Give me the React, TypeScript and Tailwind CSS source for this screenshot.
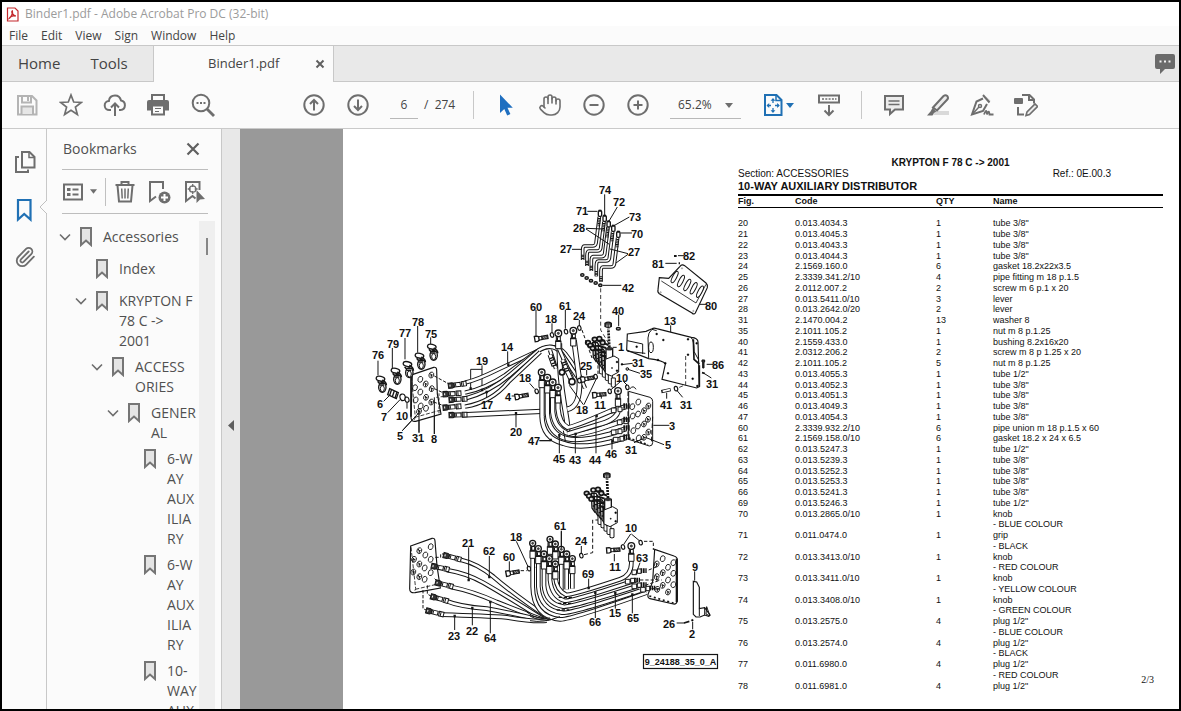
import { Fragment, type ReactNode } from 'react'
import { Hand, Paperclip } from 'lucide-react'

interface Part {
  fig: string
  code: string
  qty: number
  name: string
  note?: string
}

interface BookmarkNode {
  title: string
  children?: BookmarkNode[]
}

const parts: Part[] = [
  { fig: '20', code: '0.013.4034.3', qty: 1, name: 'tube 3/8"' },
  { fig: '21', code: '0.013.4045.3', qty: 1, name: 'tube 3/8"' },
  { fig: '22', code: '0.013.4043.3', qty: 1, name: 'tube 3/8"' },
  { fig: '23', code: '0.013.4044.3', qty: 1, name: 'tube 3/8"' },
  { fig: '24', code: '2.1569.160.0', qty: 6, name: 'gasket 18.2x22x3.5' },
  { fig: '25', code: '2.3339.341.2/10', qty: 4, name: 'pipe fitting m 18 p.1.5' },
  { fig: '26', code: '2.0112.007.2', qty: 2, name: 'screw m 6 p.1 x 20' },
  { fig: '27', code: '0.013.5411.0/10', qty: 3, name: 'lever' },
  { fig: '28', code: '0.013.2642.0/20', qty: 2, name: 'lever' },
  { fig: '31', code: '2.1470.004.2', qty: 13, name: 'washer 8' },
  { fig: '35', code: '2.1011.105.2', qty: 1, name: 'nut m 8 p.1.25' },
  { fig: '40', code: '2.1559.433.0', qty: 1, name: 'bushing 8.2x16x20' },
  { fig: '41', code: '2.0312.206.2', qty: 2, name: 'screw m 8 p 1.25 x 20' },
  { fig: '42', code: '2.1011.105.2', qty: 5, name: 'nut m 8 p.1.25' },
  { fig: '43', code: '0.013.4055.3', qty: 1, name: 'tube 1/2"' },
  { fig: '44', code: '0.013.4052.3', qty: 1, name: 'tube 3/8"' },
  { fig: '45', code: '0.013.4051.3', qty: 1, name: 'tube 3/8"' },
  { fig: '46', code: '0.013.4049.3', qty: 1, name: 'tube 3/8"' },
  { fig: '47', code: '0.013.4054.3', qty: 1, name: 'tube 3/8"' },
  { fig: '60', code: '2.3339.932.2/10', qty: 6, name: 'pipe union m 18 p.1.5 x 60' },
  { fig: '61', code: '2.1569.158.0/10', qty: 6, name: 'gasket 18.2 x 24 x 6.5' },
  { fig: '62', code: '0.013.5247.3', qty: 1, name: 'tube 1/2"' },
  { fig: '63', code: '0.013.5239.3', qty: 1, name: 'tube 3/8"' },
  { fig: '64', code: '0.013.5252.3', qty: 1, name: 'tube 3/8"' },
  { fig: '65', code: '0.013.5253.3', qty: 1, name: 'tube 3/8"' },
  { fig: '66', code: '0.013.5241.3', qty: 1, name: 'tube 3/8"' },
  { fig: '69', code: '0.013.5246.3', qty: 1, name: 'tube 1/2"' },
  { fig: '70', code: '0.013.2865.0/10', qty: 1, name: 'knob', note: '- BLUE COLOUR' },
  { fig: '71', code: '0.011.0474.0', qty: 1, name: 'grip', note: '- BLACK' },
  { fig: '72', code: '0.013.3413.0/10', qty: 1, name: 'knob', note: '- RED COLOUR' },
  { fig: '73', code: '0.013.3411.0/10', qty: 1, name: 'knob', note: '- YELLOW COLOUR' },
  { fig: '74', code: '0.013.3408.0/10', qty: 1, name: 'knob', note: '- GREEN COLOUR' },
  { fig: '75', code: '0.013.2575.0', qty: 4, name: 'plug 1/2"', note: '- BLUE COLOUR' },
  { fig: '76', code: '0.013.2574.0', qty: 4, name: 'plug 1/2"', note: '- BLACK' },
  { fig: '77', code: '0.011.6980.0', qty: 4, name: 'plug 1/2"', note: '- RED COLOUR' },
  { fig: '78', code: '0.011.6981.0', qty: 4, name: 'plug 1/2"' },
]

const bookmarks: BookmarkNode[] = [
  {
    title: 'Accessories',
    children: [
      { title: 'Index' },
      {
        title: 'KRYPTON F\n78 C ->\n2001',
        children: [
          {
            title: 'ACCESS\nORIES',
            children: [
              {
                title: 'GENER\nAL',
                children: [
                  { title: '6-W\nAY\nAUX\nILIA\nRY' },
                  { title: '6-W\nAY\nAUX\nILIA\nRY' },
                  { title: '10-\nWAY\nAUX\nILIA\nRY' },
                ],
              },
            ],
          },
        ],
      },
    ],
  },
]

// callout number, centre x, centre y
const callouts: [string, number, number][] = [
  ['74', 605, 190], ['72', 619, 202], ['71', 582, 211], ['73', 635, 217], ['28', 579, 228],
  ['70', 637, 234], ['27', 566, 249], ['27', 634, 252], ['82', 689, 256], ['81', 658, 264],
  ['42', 628, 288], ['80', 711, 306], ['60', 536, 307], ['61', 565, 306], ['24', 579, 316],
  ['18', 551, 319], ['40', 618, 311], ['13', 670, 321], ['78', 418, 322], ['77', 405, 333],
  ['75', 431, 334], ['79', 393, 344], ['76', 378, 355], ['14', 507, 347], ['19', 482, 361],
  ['1', 621, 347], ['31', 638, 363], ['35', 646, 374], ['25', 586, 366], ['86', 718, 365],
  ['18', 525, 378], ['10', 622, 378], ['31', 712, 384], ['4', 508, 397], ['17', 487, 405],
  ['6', 380, 404], ['7', 384, 417], ['10', 402, 416], ['18', 582, 410], ['11', 600, 405],
  ['41', 666, 405], ['31', 686, 405], ['3', 672, 426], ['5', 668, 445], ['31', 631, 450],
  ['20', 516, 432], ['5', 400, 436], ['31', 418, 438], ['8', 434, 439], ['47', 534, 441],
  ['45', 559, 459], ['43', 575, 460], ['44', 595, 460], ['46', 611, 454], ['61', 560, 526],
  ['10', 631, 528], ['18', 516, 537], ['24', 581, 541], ['21', 468, 543], ['62', 489, 551],
  ['60', 509, 557], ['63', 642, 558], ['11', 615, 567], ['9', 695, 567], ['69', 588, 574],
  ['15', 615, 613], ['66', 595, 622], ['65', 633, 618], ['26', 669, 624], ['2', 692, 634],
  ['23', 454, 636], ['22', 472, 631], ['64', 490, 638],
]

function Icon({ children, className = 'h-6 w-6' }: { children: ReactNode; className?: string }) {
  return (
    <svg viewBox="0 0 24 24" className={className} fill="none" stroke="currentColor" strokeWidth="2" aria-hidden="true">
      {children}
    </svg>
  )
}

function ToolButton({ label, children, className = 'text-[#6e6e6e]' }: { label: string; children: ReactNode; className?: string }) {
  return (
    <button aria-label={label} className={`flex h-9 w-11 shrink-0 items-center justify-center ${className}`}>
      {children}
    </button>
  )
}

function Divider() {
  return <div className="h-7 w-px shrink-0 bg-[#c8c8c8]" />
}

function Toolbar() {
  return (
    <div className="flex h-[47px] items-center overflow-hidden border-b border-[#cacaca] bg-[#fbfbfb] pl-[3px]">
      <ToolButton label="Save" className="text-[#b4b4b4]">
        <Icon>
          <path d="M3 3h14l4.500 4.500V21.500H3z" />
          <path d="M7 3v6.500h9V3M13 4v4" />
          <path d="M6.500 21v-7.500h11.500V21" fill="#e6e6e6" />
        </Icon>
      </ToolButton>
      <ToolButton label="Star">
        <Icon>
          <path d="M12 2l2.700 7 7.600.4-5.900 4.700 2 7.400L12 17.300 5.600 21.500l2-7.400L1.700 9.400 9.300 9z" strokeWidth="1.700" />
        </Icon>
      </ToolButton>
      <ToolButton label="Share">
        <Icon>
          <path d="M8 17H6.500a4.500 4.500 0 0 1-.6-9C6.300 4.600 8.800 2.500 12 2.500s5.300 2 6 5a4.800 4.800 0 0 1-.5 9.500H16" />
          <path d="M12 23V11M8 14.500l4-4 4 4" />
        </Icon>
      </ToolButton>
      <ToolButton label="Print">
        <Icon>
          <path d="M5 7V2h12v5" />
          <path d="M2 7h18a2 2 0 0 1 2 2v8.500h-4v-4.500H4v4.500H0V9a2 2 0 0 1 2-2z" fill="currentColor" stroke="none" />
          <path d="M5 12.500v9h12v-9z" fill="#fbfbfb" />
          <path d="M8 15.500h6M8 18.500h4" strokeWidth="1.200" />
        </Icon>
      </ToolButton>
      <ToolButton label="Find">
        <Icon>
          <circle cx="10" cy="10" r="8.300" />
          <path d="M16 16l7 7" strokeWidth="2.800" />
          <path d="M5.500 10h2M9 10h2M12.500 10h2" strokeWidth="1.800" />
        </Icon>
      </ToolButton>

      <div className="w-[67px] shrink-0" />
      <ToolButton label="Previous page">
        <Icon>
          <circle cx="12" cy="12" r="9.700" />
          <path d="M12 17.500V7M8 11l4-4 4 4" />
        </Icon>
      </ToolButton>
      <ToolButton label="Next page">
        <Icon>
          <circle cx="12" cy="12" r="9.700" />
          <path d="M12 6.500V17M8 13l4 4 4-4" />
        </Icon>
      </ToolButton>
      <input
        aria-label="Page number"
        defaultValue="6"
        className="ml-2.5 h-7 w-7 shrink-0 border-b border-[#b8b8b8] bg-transparent text-center text-xs outline-none"
      />
      <span className="ml-1.5 w-[49px] shrink-0 whitespace-pre text-xs">/  274</span>
      <Divider />
      <div className="w-2.5 shrink-0" />

      <ToolButton label="Select" className="text-[#1f6fc0]">
        <Icon>
          <path d="M6 1.500v18.500l4.300-4 2.900 6.500 3.200-1.400-2.900-6.300h5.300z" fill="currentColor" stroke="none" />
        </Icon>
      </ToolButton>
      <ToolButton label="Pan">
        <Hand className="h-6 w-6" strokeWidth={1.6} />
      </ToolButton>
      <ToolButton label="Zoom out">
        <Icon>
          <circle cx="12" cy="12" r="9.700" />
          <path d="M7.500 12h9" />
        </Icon>
      </ToolButton>
      <ToolButton label="Zoom in">
        <Icon>
          <circle cx="12" cy="12" r="9.700" />
          <path d="M7.500 12h9M12 7.500v9" />
        </Icon>
      </ToolButton>
      <div className="relative ml-2.5 w-[71px] shrink-0 border-b border-[#b8b8b8]">
        <select aria-label="Zoom level" className="h-[27px] w-full appearance-none bg-transparent pl-2 text-xs outline-none">
          <option>65.2%</option>
        </select>
        <svg viewBox="0 0 8 5" className="pointer-events-none absolute top-3 right-2 h-[5px] w-2" fill="#6e6e6e">
          <path d="M0 0h8L4 5z" />
        </svg>
      </div>

      <button aria-label="Fit page" className="ml-5 flex h-9 shrink-0 items-center gap-px text-[#1f70b4]">
        <Icon>
          <path d="M4 2h11.500l5 5v15H4z" />
          <path d="M15 2v5.500h5.500" strokeWidth="1.500" />
          <path d="M12 6v4M12 15v4M6 12.500h4M14 12.500h4" strokeWidth="1.300" />
          <path d="M12 5l2.400 2.700H9.600zM12 20l2.400-2.700H9.600zM5.500 12.500l2.700-2.400v4.800zM18.800 12.500l-2.700-2.400v4.800z" fill="currentColor" stroke="none" />
        </Icon>
        <svg viewBox="0 0 8 5" className="h-[5px] w-2" fill="currentColor">
          <path d="M0 0h8L4 5z" />
        </svg>
      </button>
      <div className="w-[13px] shrink-0" />
      <ToolButton label="Page display">
        <Icon>
          <rect x="2" y="2.500" width="20" height="7" />
          <path d="M5 6h2M8.300 6h2M11.600 6h2M14.900 6h2M18 6h1.500" strokeWidth="1.500" />
          <path d="M12 12v10M7.500 17.500l4.500 4.500 4.500-4.500" />
        </Icon>
      </ToolButton>
      <div className="w-2.5 shrink-0" />
      <Divider />
      <div className="w-2.5 shrink-0" />

      <ToolButton label="Comment">
        <Icon>
          <path d="M3 3h18v13.500h-8l-5 4.500v-4.500H3z" fill="#ececec" />
          <path d="M6.500 8h11M6.500 11.500h11" strokeWidth="1.300" />
        </Icon>
      </ToolButton>
      <ToolButton label="Highlight">
        <Icon>
          <path d="M10 18h13v4H7z" fill="#d9d9d9" stroke="none" />
          <path d="M7 14.500L17.500 3q2-1.500 3.800 0 1.400 2 0 3.500L11 17.500z" fill="#ececec" />
          <path d="M6.500 15l3.800 3.500-2.300 1.500-1.500 2.500H1l3.500-4z" fill="currentColor" stroke="none" />
        </Icon>
      </ToolButton>
      <ToolButton label="Sign">
        <Icon>
          <path d="M14.500 5L19 9.500l1.500-2-4.500-4z" fill="#d9d9d9" stroke="none" />
          <path d="M13 2l6.500 7.500" />
          <path d="M13 5.500l-6.500 3L2 21.500l11-3.500 4-7" />
          <path d="M2.500 21l6.500-7" strokeWidth="1.500" />
          <circle cx="10" cy="13" r="1.500" strokeWidth="1.500" />
          <path d="M14 21.500q2-5 2.500-3t.5 3q1.500-4 2-2.500t.5 2.500h4" strokeWidth="1.800" />
        </Icon>
      </ToolButton>
      <ToolButton label="More tools">
        <Icon>
          <path d="M8 2h7.500L20 6.500v4M15 2v5h5M4 14v7.500h6" />
          <rect x="0" y="5" width="9" height="6" rx="1" fill="currentColor" stroke="none" />
          <path d="M12 22.500l1-3.500L21 11l2.500 2.500-8 8z" fill="#ececec" strokeWidth="1.600" />
        </Icon>
      </ToolButton>
    </div>
  )
}

function BookmarkRow({ node }: { node: BookmarkNode }) {
  return (
    <li>
      <div className="flex min-h-8 items-start pb-1.5">
        <svg viewBox="0 0 12 20" className="h-5 w-3 shrink-0" fill="none" stroke="#6e6e6e" strokeWidth="1.600">
          {node.children && <path d="M1 7.500l5 5 5-5" />}
        </svg>
        <svg viewBox="0 0 12 20" className="ml-[9px] h-5 w-3 shrink-0" fill="#e4e4e4" stroke="#757575" strokeWidth="2">
          <path d="M1 1h10v17L6 13.500 1 18z" />
        </svg>
        <a href="#" className="ml-[11px] text-sm leading-5 whitespace-pre text-[#505050]">
          {node.title}
        </a>
      </div>
      {node.children && (
        <ul className="pl-4">
          {node.children.map((child, i) => (
            <BookmarkRow key={i} node={child} />
          ))}
        </ul>
      )}
    </li>
  )
}

function BookmarksPanel() {
  return (
    <aside className="flex w-[174px] shrink-0 flex-col bg-[#fbfbfb]">
      <div className="mr-[13px] ml-[15px] flex h-[41px] shrink-0 items-center justify-between border-b border-[#bdbdbd] pr-2 pl-px">
        <h2 className="text-sm text-[#505050]">Bookmarks</h2>
        <button aria-label="Close bookmarks" className="text-[#606060]">
          <svg viewBox="0 0 14 14" className="h-3.5 w-3.5" stroke="currentColor" strokeWidth="2.200">
            <path d="M1.500 1.500l11 11M12.500 1.500l-11 11" />
          </svg>
        </button>
      </div>
      <div className="mr-[13px] ml-[15px] flex h-11 shrink-0 items-center border-b border-[#bdbdbd] text-[#6e6e6e]">
        <button aria-label="Options" className="flex items-center gap-1.5">
          <svg viewBox="0 0 22 18" className="h-[18px] w-[22px]" fill="none" stroke="currentColor" strokeWidth="2">
            <rect x="2" y="1.500" width="18" height="15" />
            <path d="M5 6.500h3.500M5 11.500h3.500" strokeWidth="3" />
            <path d="M10.500 6.500h6M10.500 11.500h6" />
          </svg>
          <svg viewBox="0 0 8 5" className="h-[5px] w-[7px]" fill="currentColor">
            <path d="M0 0h8L4 5z" />
          </svg>
        </button>
        <div className="ml-2 h-7 w-px bg-[#c0c0c0]" />
        <button aria-label="Delete" className="ml-[7px]">
          <Icon>
            <path d="M2.500 5h19M8.500 5V2h7v3" />
            <path d="M4.500 5.500l1.500 16h12l1.500-16" />
            <path d="M8.700 8.500l.5 10M12 8.500v10M15.300 8.500l-.5 10" strokeWidth="1.500" />
          </Icon>
        </button>
        <button aria-label="New bookmark" className="ml-2.5">
          <Icon>
            <path d="M9 16.500L3 21V2h13v7" />
            <circle cx="17.500" cy="17.500" r="6" fill="currentColor" stroke="none" />
            <path d="M14 17.500h7M17.500 14v7" stroke="#fff" />
          </Icon>
        </button>
        <button aria-label="Find current bookmark" className="ml-3">
          <Icon>
            <path d="M16.500 10V2H3v19l6.500-5 3 2.500" />
            <circle cx="9.700" cy="9" r="3.200" strokeWidth="1.300" />
            <path d="M9.700 4v3M9.700 11v3M4.700 9h3M11.700 9h3" strokeWidth="1.300" />
            <path d="M13.500 10l8.500 9-5 .5-3.500 3.500z" fill="currentColor" stroke="none" />
          </Icon>
        </button>
      </div>
      <div className="mt-[7px] mr-1.5 flex min-h-0 flex-1">
        <ul className="min-h-0 flex-1 overflow-hidden pt-1.5 pl-3">
          {bookmarks.map((node, i) => (
            <BookmarkRow key={i} node={node} />
          ))}
        </ul>
        <div className="w-4 shrink-0 bg-[#efefef] pt-[17px]">
          <div className="mx-auto h-[17px] w-0.5 bg-[#868686]" />
        </div>
      </div>
    </aside>
  )
}

function Hose({ d, w = 17 }: { d: string; w?: number }) {
  return (
    <>
      <path d={d} strokeWidth={w} />
      <path d={d} strokeWidth={w - 6} stroke="#fff" />
    </>
  )
}

// ring end of a pipe with the crimped collar below it
function Eye({ x, y, r = 10 }: { x: number; y: number; r?: number }) {
  return (
    <g transform={`translate(${x} ${y})`}>
      <path d={`M-6 ${r}h12v12h-12z`} fill="#fff" strokeWidth="3" />
      <path d={`M-8 ${r + 12}h16v24h-16z`} fill="#fff" strokeWidth="3" />
      <path d={`M-8 ${r + 14}h16M-3 ${r + 2}v9`} strokeWidth="4" />
      <circle r={r} fill="#fff" strokeWidth="4" />
      <circle r={r / 3} fill="#555" strokeWidth="2" />
    </g>
  )
}

// threaded hose end, pointing left
function Fitting({ x, y, a = 0 }: { x: number; y: number; a?: number }) {
  return (
    <g transform={`translate(${x} ${y}) rotate(${a})`}>
      <path d="M-12-8h12l6 3v10l-6 3h-12z" fill="#333" strokeWidth="3" />
      <path d="M-7-3v6" stroke="#fff" strokeWidth="3" />
      <path d="M6-6h18v12H6zM28-7h14v14H28z" fill="#fff" strokeWidth="3" />
      <path d="M10-5v10M33-6v12" strokeWidth="3" />
    </g>
  )
}

function Bolt({ x, y, a = -10 }: { x: number; y: number; a?: number }) {
  return (
    <g transform={`translate(${x} ${y}) rotate(${a})`}>
      <path d="M-20-8h8l5 3v10l-5 3h-8z" fill="#fff" strokeWidth="4" />
      <path d="M-7-5h9v10h-9z" fill="#fff" strokeWidth="3" />
      <path d="M2-5h18v10H2z" fill="#444" strokeWidth="3" />
      <path d="M6-3l3 6M12-3l3 6" stroke="#fff" strokeWidth="1.500" />
    </g>
  )
}

function Washer({ x, y, r = 7 }: { x: number; y: number; r?: number }) {
  return <ellipse cx={x} cy={y} rx={r - 2} ry={r} fill="#fff" strokeWidth="3.500" transform={`rotate(-15 ${x} ${y})`} />
}

function Plug({ x, y }: { x: number; y: number }) {
  return (
    <g transform={`translate(${x} ${y})`}>
      <ellipse cx="-1" cy="-16" rx="13" ry="7" strokeWidth="4" transform="rotate(12)" />
      <path d="M8-12q12 6 12 16M-6-8l10 12" strokeWidth="5" />
      <ellipse cx="8" cy="10" rx="11" ry="15" fill="#fff" strokeWidth="4" />
      <ellipse cx="8" cy="14" rx="6" ry="9" strokeWidth="3" />
      <path d="M0-2h16M-1 3h15" strokeWidth="4" />
    </g>
  )
}

function ValveBlock({ x, y }: { x: number; y: number }) {
  return (
    <g transform={`translate(${x} ${y})`}>
      {[0, 1, 2, 3, 4].map(i => (
        <g key={i} transform={`translate(${i * 9} ${i * 10})`}>
          <path d="M-20-44h14l8 12v32l-12 12-8-12z" fill="#fff" strokeWidth="4" />
          <path d="M-19-34h16M-18-20h16M-16-6h14M-12-44v48" strokeWidth="4" />
          <path d="M0 22h12v26q-6 4-12 0z" fill="#fff" strokeWidth="3" />
        </g>
      ))}
      {[[-34, -44], [-27, -36], [-20, -27], [-14, -54], [0, -56], [10, -44]].map(([cx, cy]) => (
        <g key={cx}>
          <ellipse cx={cx} cy={cy} rx="7" ry="6" fill="#ddd" strokeWidth="5" />
          <path d={`M${cx + 5} ${cy + 2}l12 5`} strokeWidth="6" />
        </g>
      ))}
      <path d="M-6-36l26 8M0-22l22 10M2-8l20 8" strokeWidth="6" />
      <path d="M20-26h20v32H20z" fill="#fff" strokeWidth="4" />
      <ellipse cx="30" cy="-26" rx="10" ry="5" fill="#333" />
      <path d="M18 6l26-10 14 8v40l-22 12-18-8z" fill="#fff" strokeWidth="3" />
      <circle cx="38" cy="32" r="2" fill="#000" />
      <circle cx="53" cy="14" r="3" fill="#000" />
      <circle cx="53" cy="40" r="3" fill="#000" />
      <path d="M30-30l-3-56" strokeWidth="8" strokeDasharray="6 3" />
      <path d="M17-102q10-7 19 0v9q-9 6-19 0z" fill="#444" strokeWidth="4" />
      <path d="M23-98v7M30-98v7" stroke="#fff" strokeWidth="2" />
    </g>
  )
}

function Holes({ at, rx = 7, ry = 9 }: { at: [number, number][]; rx?: number; ry?: number }) {
  return (
    <>
      {at.map(([x, y], i) => (
        <g key={i}>
          <ellipse cx={x} cy={y} rx={rx} ry={ry} strokeWidth="2.500" transform={`rotate(20 ${x} ${y})`} />
          {i % 2 === 1 && <path d={`M${x - 4} ${y - 5}q8 4 3 12M${x - 3} ${y}h7`} strokeWidth="3" />}
        </g>
      ))}
    </>
  )
}

function Levers() {
  return (
    <g transform="translate(540 175) scale(0.333333)">
      {[
        [180, 115, 128, 225],
        [194, 130, 141, 243],
        [206, 147, 154, 258],
        [220, 160, 169, 274],
        [235, 178, 183, 290],
      ].map(([x, y, lx, ly]) => (
        <g key={x}>
          <Hose w={11} d={`M${x - 2} ${y + 10}L${x - 12} ${y + 90}Q${x - 14} ${y + 98} ${x - 22} ${y + 98}H${lx + 6}Q${lx} ${y + 98} ${lx} ${ly}V${ly + 30}`} />
          <path d={`M${x - 2} ${y + 14}l-2 26M${lx} ${ly + 14}v16`} strokeWidth="8" strokeDasharray="3 2" />
          <rect x={x - 5} y={y - 8} width="10" height="17" rx="3" fill="#fff" strokeWidth="4" />
          <path d={`M${x - 4} ${y - 8}h8`} strokeWidth="6" />
        </g>
      ))}
      {[[127, 300], [140, 309], [153, 317], [167, 324], [181, 331]].map(([x, y]) => (
        <ellipse key={x} cx={x} cy={y} rx="5" ry="4" strokeWidth="4" fill="#999" />
      ))}
      <path d="M142 109h30M194 58v64M232 96l-26 44M268 126l-46 26M276 174h-34M138 160l52 2M138 162l70 46M96 223h30M264 236l-54-14M264 238l-36 26M188 331h56" strokeWidth="3" />
      <path d="M182 340v125l24 40" strokeWidth="2.500" strokeDasharray="12 8" />
      <path d="M432 242h-18M376 265h34M498 388h-24" strokeWidth="3" />
      <path d="M402 243h8M416 265h4" strokeWidth="6" />
      <path d="M358 308l28 2 34-36q6-8 14-2l64 52q6 6 4 14l-36 76q-4 6-10 0l-98-58q-6-4-4-12z" fill="#fff" strokeWidth="3.500" />
      <path d="M364 318l104 66 30-56" strokeWidth="2.500" />
      {[[404, 306], [423, 318], [442, 330], [461, 340], [480, 350]].map(([x, y]) => (
        <ellipse key={x} cx={x} cy={y} rx="6" ry="19" strokeWidth="3" fill="#fff" transform={`rotate(28 ${x} ${y})`} />
      ))}
      <circle cx="362" cy="352" r="2" />
      <circle cx="460" cy="408" r="2" />
      <circle cx="426" cy="280" r="2" />
    </g>
  )
}

function UpperAssembly() {
  return (
    <>
      <g transform="translate(365 310) scale(0.333333)">
        <path d="M39 152v44M82 114v60M120 84v64M158 48v80M197 82v20M428 124v40M351 166v74M351 178h-34v56M365 268v-24M453 352v-42M56 274l18-18M68 308l38-40M126 296v-18M112 362l50-54M162 368v-70M208 372v-110M494 220l14 16M440 258h16M524 392h30" strokeWidth="3" />
        <path d="M142 194l64-22q8-2 9 8l2 72 11 60-76 22q-14 2-14-12z" fill="#fff" strokeWidth="3.500" />
        <path d="M139 200l12 122-6 12M150 322l78-22" strokeWidth="2.500" strokeDasharray="12 5" />
        <path d="M138 200v120" strokeWidth="5" />
        <Holes at={[[166, 208], [199, 195], [150, 233], [182, 222], [166, 246], [200, 236], [152, 270], [183, 262], [167, 288], [199, 276], [183, 295], [162, 304]]} />
        <path d="M162 368v-70M208 372v-110M112 362l50-54" strokeWidth="3" />
        <path d="M208 198l44 24M208 236l34 16M206 276l38 14" strokeWidth="3" strokeDasharray="10 5" />
        <path d="M214 262l34-4M222 250v60" strokeWidth="2.500" strokeDasharray="8 5" />
        {[[44, 222], [89, 198], [125, 178], [161, 153], [198, 126]].map(([x, y]) => (
          <Plug key={x} x={x} y={y} />
        ))}
        <path d="M74 236l26 12-6 18-26-12z" fill="#fff" strokeWidth="4" />
        <path d="M80 238l-6 18M88 242l-6 18M96 246l-6 18" strokeWidth="4" />
        <Washer x={113} y={262} r={10} />
        <Washer x={126} y={269} r={8} />

        <Hose w={13} d="M300 218Q340 208 400 178L520 122Q570 96 600 130Q640 180 660 235" />
        <Hose w={13} d="M300 248Q360 236 420 196L510 128Q560 92 590 130L640 205" />
        <Hose w={13} d="M300 266Q380 244 440 190L520 122" />
        <Hose w={13} d="M300 290Q380 276 430 216L526 126" />
        <Fitting x={262} y={226} a={-8} />
        <Fitting x={246} y={252} a={-4} />
        <Fitting x={264} y={269} a={-4} />
        <Fitting x={246} y={292} a={-5} />
        <Hose w={16} d="M290 315L530 304" />
        <Fitting x={264} y={315} a={-2} />
        <path d="M430 160v8M317 232v8M351 236v8M365 242v8M453 306v8" strokeWidth="7" />
        <Bolt x={470} y={258} />
        <Washer x={515} y={244} />
        <path d="M526 242h26" strokeWidth="3" strokeDasharray="8 5" />
      </g>

      <g transform="translate(530 310) scale(0.333333)">
        <Hose d="M88 100Q88 200 102 280T112 360" />
        <Hose d="M132 90L148 210Q152 290 112 298" />
        <Hose w={13} d="M60 120L78 176M88 118L126 205" />
        <Hose w={15} d="M60 134l12 34M98 150l14 34M112 184l12 26" />
        <path d="M64 142l4 10M70 158l4 12M100 156l4 10M108 174l4 12" strokeWidth="13" strokeDasharray="4 3" />
        <circle cx="126" cy="215" r="9" fill="#fff" strokeWidth="5" />
        <circle cx="96" cy="187" r="8" fill="#fff" strokeWidth="5" />

        <Hose d="M36 220V320Q38 385 100 400Q150 418 240 396L290 382" w={16} />
        <Hose d="M52 240V310Q56 372 110 386Q150 396 240 372L288 356" w={16} />
        <Hose d="M68 250V306Q74 360 120 372Q150 378 240 346L288 330" w={16} />
        <Hose d="M84 260V296Q88 340 112 352Q120 356 240 304L288 290" w={16} />
        <Hose d="M265 280V300Q262 330 200 345L112 372" w={16} />
        <Eye x={85} y={70} />
        <Eye x={130} y={62} />
        <Eye x={35} y={187} />
        <Eye x={52} y={203} />
        <Eye x={68} y={217} />
        <Eye x={84} y={233} />
        <Eye x={264} y={243} />

        <path d="M296 244l64 18q8 3 8 12v124q0 10-10 10l-62-20z" fill="#fff" strokeWidth="3" />
        <path d="M294 244v144M368 320l-4 80" strokeWidth="3" strokeDasharray="14 6" />
        <path d="M296 384l58 20" strokeWidth="5" strokeDasharray="6 6" />
        <Holes at={[[325, 276], [355, 288], [307, 290], [342, 302], [324, 312], [354, 328], [308, 318], [342, 342], [324, 348], [355, 366], [310, 362], [342, 382], [326, 384]]} />
        {[[250, 300], [268, 336], [250, 366], [256, 388]].map(([x, y]) => (
          <path key={y} d={`M${x - 6} ${y - 6}h14v14h-14zM${x + 14} ${y - 9}h12v14h-12z`} fill="#fff" strokeWidth="3" />
        ))}
        {[288, 328, 354, 381].map(y => (
          <path key={y} d={`M280 ${y}h20`} strokeWidth="16" strokeDasharray="5 2" />
        ))}

        <ValveBlock x={208} y={142} />
        <path d="M100 362l6 30M88 376v54M136 372v58M198 318v112M246 394v24M62 392h-34M370 346h48M346 382l56 22M312 398l28-12M266 14v34M260 112h-12M308 160l-34 4M330 190l-36-12M422 46v22M550 163h-20M544 204l-22-14M410 266v-18M458 262l-20-24M214 266v-10M270 216l-28 24M280 214l14 14M170 180v16M160 284l-42-58M162 284l38-80M106 0v56M148 30v20M66 40v28M18 0v78" strokeWidth="3" />
        <path d="M200 314v8M137 368v8M88 372v8M62 386v8M247 390v8" strokeWidth="7" />
        <Bolt x={34} y={84} />
        <Washer x={66} y={75} />
        <Washer x={108} y={65} />
        <Washer x={148} y={54} />
        <Bolt x={172} y={206} />
        <Washer x={148} y={212} />
        <Washer x={197} y={200} />
        <Bolt x={208} y={254} a={-5} />
        <Washer x={239} y={244} />
        <Washer x={292} y={232} />
        <path d="M300 236q10-12 18 2" strokeWidth="3" />
        <ellipse cx="265" cy="56" rx="6" ry="4" strokeWidth="4" fill="#aaa" />
        <circle cx="276" cy="163" r="3" fill="#000" />
        <circle cx="292" cy="177" r="4" fill="#aaa" strokeWidth="3" />
        <path d="M156 60l30 84M204 150v46" strokeWidth="3" strokeDasharray="10 6" />

        <path d="M292 72l56-8 18-8q6-3 14 0l104 26q20 2 20 14l4 134-8 4-104-26 10-46q-4-10-50-16l-66-26z" fill="#fff" strokeWidth="3.500" />
        <path d="M366 58q-12 10-12 26l2 60M484 84q8 6 8 40l14 26M292 92l46 10v30M380 62l-14-4M292 124l54 6" strokeWidth="3" />
        <path d="M490 88l2 60 16 14M508 230v-64" strokeWidth="5" />
        <ellipse cx="363" cy="112" rx="7" ry="16" strokeWidth="3" />
        {[[320, 110], [380, 72], [400, 90], [474, 88], [406, 160], [414, 190], [474, 134], [488, 206], [384, 150], [500, 100], [502, 228]].map(([x, y]) => (
          <circle key={`${x}-${y}`} cx={x} cy={y} r="3" fill="#000" strokeWidth="1" />
        ))}
        <path d="M467 138v86l-28 12" strokeWidth="2.500" strokeDasharray="12 7" />
        <path d="M516 150h8v6h-2v18h-4v-18h-2z" fill="#333" strokeWidth="3" />
        <path d="M516 188l8 2" strokeWidth="5" />
        <path d="M394 245l28-6" strokeWidth="10" />
        <path d="M398 244l22-5" strokeWidth="5" stroke="#fff" />
        <Washer x={438} y={236} />
      </g>
    </>
  )
}

function LowerAssembly() {
  return (
    <>
      <g transform="translate(400 510) scale(0.333333)">
        <path d="M32 108l64-23q8-2 9 8l6 75 10 66-76 14q-16 2-16-12z" fill="#fff" strokeWidth="3.500" />
        <path d="M33 112l14 124-4 10M46 238l76-18" strokeWidth="2.500" strokeDasharray="12 5" />
        <Holes at={[[92, 110], [58, 122], [76, 135], [42, 148], [92, 148], [58, 162], [74, 174], [40, 186], [92, 188], [58, 200], [74, 208]]} />
        <path d="M106 142h16v-10h14M94 168l14-4M104 206l10 10M82 226v26l14 8M69 240v56l14 6" strokeWidth="3" strokeDasharray="10 5" />

        <Hose w={14} d="M184 150Q230 160 280 200Q350 260 450 326" />
        <Hose w={14} d="M140 180Q200 190 250 218Q340 270 430 328" />
        <Hose w={14} d="M150 230Q220 244 290 276Q350 300 430 330" />
        <Hose w={14} d="M136 272Q180 290 260 296Q340 310 430 332" />
        <Hose w={14} d="M124 314Q260 318 320 322Q400 336 440 332" />
        <Fitting x={142} y={138} a={15} />
        <Fitting x={106} y={170} a={12} />
        <Fitting x={118} y={220} a={14} />
        <Fitting x={104} y={262} a={16} />
        <Fitting x={90} y={304} a={14} />
        <path d="M206 112v96M268 138v62M349 94l36 78M328 154v30M484 62v56M164 360v-42M217 346v-54M271 370v-96" strokeWidth="3" />
        <path d="M206 206v8M268 197v8M164 314v8M217 290v8M271 272v8" strokeWidth="7" />
        <Bolt x={338} y={188} />
        <Washer x={387} y={176} />
        <path d="M362 182h18M396 174l40-8" strokeWidth="3" strokeDasharray="10 6" />
      </g>

      <g transform="translate(530 460) scale(0.333333)">
        {/* nested bends, outermost first */}
        <Hose w={14} d="M8 290V380Q10 470 90 478Q120 480 350 398" />
        <Hose w={14} d="M25 300V380Q30 450 96 458Q120 462 330 392" />
        <Hose w={14} d="M42 310V376Q46 430 100 440Q120 444 330 376" />
        <Hose w={14} d="M60 270V360Q66 412 104 422Q120 426 320 360" />
        <Hose w={14} d="M94 310V390" />
        <Hose w={14} d="M110 310V388" />
        <Hose w={14} d="M127 310V386" />
        <Hose w={14} d="M76 340V350Q80 392 108 404Q120 408 270 358Q304 346 304 310V290" />
        <path d="M0 482Q40 490 90 470M0 468Q30 486 70 478M-10 456Q20 480 60 474" strokeWidth="3" />
        <path d="M86 412h40M84 430h40M80 450h38" strokeWidth="4" strokeDasharray="10 5" />
        <Eye x={60} y={238} r={9} />
        <Eye x={76} y={252} r={9} />
        <Eye x={94} y={268} r={9} />
        <Eye x={110} y={282} r={9} />
        <Eye x={127} y={296} r={9} />
        <Eye x={8} y={250} r={9} />
        <Eye x={25} y={266} r={9} />
        <Eye x={42} y={282} r={9} />
        <Eye x={58} y={296} r={9} />
        <Eye x={76} y={312} r={9} />
        <Eye x={304} y={258} />

        <path d="M374 268l58 20q10 3 10 12v122q-2 12-12 10l-70-16q-8-2-6-12l14-40z" fill="#fff" strokeWidth="3.500" />
        <path d="M440 296v130" strokeWidth="6" />
        <path d="M358 408l74 22" strokeWidth="5" strokeDasharray="6 8" />
        <Holes at={[[398, 296], [380, 312], [430, 308], [398, 338], [414, 322], [380, 350], [430, 340], [398, 376], [414, 360], [382, 388], [430, 374], [414, 396]]} />
        {[[336, 332], [316, 360], [336, 374], [362, 384]].map(([x, y]) => (
          <g key={x + y}>
            <path d={`M${x - 30} ${y - 2}h14v14h-14zM${x - 14} ${y - 5}h12v13h-12z`} fill="#fff" strokeWidth="3" />
            <path d={`M${x - 4} ${y}h18`} strokeWidth="14" strokeDasharray="5 2" />
          </g>
        ))}
        <path d="M342 244h28v26M356 330l30-12M330 360h66M346 376l40-14M364 386h24" strokeWidth="3" strokeDasharray="10 6" />

        <ValveBlock x={204} y={144} />
        <path d="M162 284l26-6V180h16" strokeWidth="3" strokeDasharray="12 7" />
        <path d="M94 214v50M154 258v22M176 356v26M196 474v-78M256 446v-48M307 460v-58M330 308l-12 34M253 304v-22M302 222l-20 30M304 222l24 20M494 334v28M440 489h24M488 508v-22" strokeWidth="3" />
        <path d="M176 380v8M196 394v8M256 396v8M307 400v8" strokeWidth="7" />
        <Bolt x={250} y={270} a={-4} />
        <Washer x={279} y={261} />
        <Washer x={332} y={248} />
        <Washer x={154} y={287} />
        <path d="M490 364l10 2 8 16v64l16-3 16 22-4 4-12-4-14 6h-12l-8-8z" fill="#fff" strokeWidth="3.500" />
        <path d="M508 446v22M524 442v24M530 440l10 28-12-6z" strokeWidth="3" />
        <path d="M462 489l16-5" strokeWidth="5" />
        <circle cx="487" cy="481" r="3" fill="#000" />
      </g>
    </>
  )
}

function Diagram() {
  return (
    <svg viewBox="360 170 370 510" className="h-[510px] w-[370px] shrink-0" role="img" aria-label="10-way auxiliary distributor">
      <g fill="none" stroke="#151515">
        <Levers />
        <UpperAssembly />
        <LowerAssembly />
        <rect x="643.500" y="654.500" width="74" height="14" strokeWidth="1.200" />
      </g>
      <g fontFamily="Liberation Sans, Arial, sans-serif" fontWeight="700" fontSize="11" textAnchor="middle" fill="#111">
        {callouts.map(([n, x, y], i) => (
          <text key={i} x={x} y={y + 4}>
            {n}
          </text>
        ))}
        <text x="680.500" y="665" fontSize="9">
          9_24188_35_0_A
        </text>
      </g>
    </svg>
  )
}

function PartsSheet() {
  return (
    <section className="ml-2 min-w-0 flex-1 text-[9px] leading-[10px] text-[#111]">
      <h1 className="text-center text-[10px] leading-[11px] font-bold">KRYPTON F 78 C -&gt; 2001</h1>
      <div className="flex justify-between pr-[52px] text-[10px] leading-[11px]">
        <span>Section: ACCESSORIES</span>
        <span>Ref.: 0E.00.3</span>
      </div>
      <h2 className="text-[11px] leading-[15px] font-bold">10-WAY AUXILIARY DISTRIBUTOR</h2>
      <table className="w-full table-fixed border-collapse text-left">
        <colgroup>
          <col className="w-[57px]" />
          <col className="w-[141px]" />
          <col className="w-[57px]" />
          <col />
        </colgroup>
        <thead>
          <tr className="h-3 border-t-2 border-b border-black align-top">
            <th>Fig.</th>
            <th>Code</th>
            <th>QTY</th>
            <th>Name</th>
          </tr>
        </thead>
        <tbody>
          <tr className="h-[11px]">
            <td colSpan={4} />
          </tr>
        </tbody>
        <tbody>
          {parts.map(part => (
            <Fragment key={part.fig}>
              <tr className="h-[11px] align-top nth-[4n]:h-[10px]">
                <td>{part.fig}</td>
                <td>{part.code}</td>
                <td>{part.qty}</td>
                <td>{part.name}</td>
              </tr>
              {part.note && (
                <tr className="h-[11px] align-top nth-[4n]:h-[10px]">
                  <td colSpan={3} />
                  <td>{part.note}</td>
                </tr>
              )}
            </Fragment>
          ))}
        </tbody>
      </table>
      <p className="-mt-4 pr-[9px] text-right font-['Liberation_Serif',serif] text-[10px]">2/3</p>
    </section>
  )
}

export default function App() {
  return (
    <div className="flex h-screen flex-col overflow-hidden border-2 border-black bg-white font-['Open_Sans','Noto_Sans',sans-serif] text-[#444]">
      <header className="shrink-0">
        <div className="flex h-6 items-center gap-1.5 pl-1 text-xs text-[#9b9b9b]">
          <svg viewBox="0 0 13 15" className="h-[15px] w-[13px]" fill="none" stroke="#c4282d">
            <path d="M1.500 1h7.500l3 3v10h-10.500z" strokeWidth="1.200" fill="#fff" />
            <path d="M3.500 11c2-1 3.500-5 2.800-7-1.400.6.700 4.500 3.500 5-2.300-.6-5.300.3-6.300 2z" strokeWidth="1.400" />
          </svg>
          <span>Binder1.pdf - Adobe Acrobat Pro DC (32-bit)</span>
        </div>
        <nav className="flex h-[19px] items-center gap-[13px] bg-[#fbfbfb] pl-[7px] text-xs">
          {['File', 'Edit', 'View', 'Sign', 'Window', 'Help'].map(item => (
            <button key={item}>{item}</button>
          ))}
        </nav>
        <div className="flex h-[37px] items-stretch border-t border-[#c8c8c8] bg-[#e9e9e9]">
          <div className="flex w-[152px] shrink-0 items-center gap-[30px] border-r border-b border-[#c8c8c8] pl-4 text-[15px]">
            <button>Home</button>
            <button>Tools</button>
          </div>
          <div className="flex w-[179px] shrink-0 items-center justify-between bg-[#fbfbfb] pr-2 pl-[54px] text-[13px]">
            <span>Binder1.pdf</span>
            <button aria-label="Close tab" className="text-[#606060]">
              <svg viewBox="0 0 10 10" className="h-2.5 w-2.5" stroke="currentColor" strokeWidth="2">
                <path d="M1.500 1.500l7 7M8.500 1.500l-7 7" />
              </svg>
            </button>
          </div>
          <div className="flex flex-1 items-center justify-end border-b border-l border-[#c8c8c8] pr-1">
            <button aria-label="Notifications">
              <svg viewBox="0 0 20 20" className="h-5 w-5" fill="#6b6b6b">
                <path d="M2 0h16a2 2 0 0 1 2 2v11a2 2 0 0 1-2 2h-8l-5 5v-5H2a2 2 0 0 1-2-2V2a2 2 0 0 1 2-2z" />
                <path d="M4.500 6.500h2v2h-2zM9 6.500h2v2H9zM13.500 6.500h2v2h-2z" fill="#f4f4f4" />
              </svg>
            </button>
          </div>
        </div>
        <Toolbar />
      </header>

      <main className="flex min-h-0 flex-1">
        <div className="relative flex w-[45px] shrink-0 flex-col items-center gap-6 border-r border-[#c8c8c8] bg-[#fbfbfb] pt-[21px] pl-px text-[#6e6e6e]">
          <button aria-label="Page thumbnails">
            <Icon>
              <path d="M9 2h7.500l5 5v10.500H9z" />
              <path d="M16 2v5.500h5.500" strokeWidth="1.500" />
              <path d="M6 7H3v15h12v-2.500" />
            </Icon>
          </button>
          <button aria-label="Bookmarks" className="text-[#1f70b4]">
            <Icon>
              <path d="M5 2h12.500v19.500L11.200 16 5 21.500z" strokeWidth="2.200" />
            </Icon>
          </button>
          <button aria-label="Attachments">
            <Paperclip className="h-[22px] w-[22px]" />
          </button>
          <svg viewBox="0 0 8 14" className="absolute top-[71px] -right-px h-3.5 w-2" fill="#fbfbfb" stroke="#c0c0c0">
            <path d="M8 0L1 7l7 7" />
          </svg>
        </div>
        <BookmarksPanel />
        <button aria-label="Collapse panel" className="flex w-[19px] shrink-0 items-center justify-center border-l border-[#c8c8c8] bg-[#e8e8e8]">
          <svg viewBox="0 0 6 11" className="mt-3 h-[11px] w-1.5" fill="#5e5e5e">
            <path d="M6 0v11L0 5.500z" />
          </svg>
        </button>
        <div className="flex min-w-0 flex-1 bg-[#999] pl-[103px]">
          <article className="flex min-w-0 flex-1 items-start bg-white pr-4 pl-[17px] font-['Liberation_Sans',Arial,sans-serif]">
            <div className="mt-[41px] shrink-0">
              <Diagram />
            </div>
            <div className="mt-7 flex min-w-0 flex-1">
              <PartsSheet />
            </div>
          </article>
        </div>
      </main>
    </div>
  )
}
